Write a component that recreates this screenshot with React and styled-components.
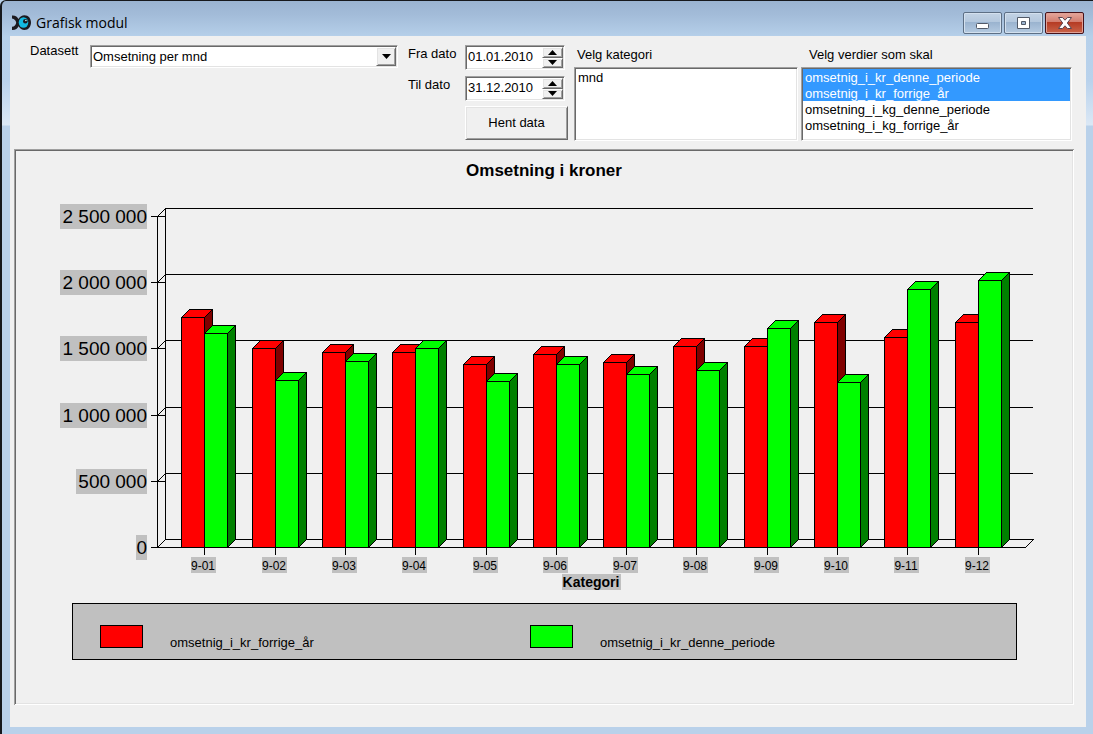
import React from 'react';
import styled, { createGlobalStyle, css } from 'styled-components';

const GlobalStyle = createGlobalStyle`
  *, *::before, *::after {
    box-sizing: border-box;
  }

  body {
    margin: 0;
    background: #b9d1ea;
    color: #000;
    font-family: 'Liberation Sans', Arial, sans-serif;
    font-size: 13px;
    line-height: 16px;
  }

  button, input, select {
    font: inherit;
    color: inherit;
    margin: 0;
    border-radius: 0;
  }
`;

const Bevel = styled.div`
  padding: 1px;
  background: #fff;
  border: 1px solid;
  border-color: #a0a0a0 #fff #fff #a0a0a0;
  box-shadow: inset 1px 1px #696969, inset -1px -1px #e3e3e3;
`;

const raised = css`
  background: #f0f0f0;
  border: 1px solid;
  border-color: #fff #696969 #696969 #fff;
  box-shadow: inset 1px 1px #e3e3e3, inset -1px -1px #a0a0a0;
`;

const Window = styled.main`
  display: flex;
  flex-direction: column;
  min-height: 100vh;
  padding: 0 7px 7px 8px;
  border: solid #16181c;
  border-width: 1px 0 0 2px;
  border-top-left-radius: 6px;
  background: linear-gradient(
    #9ab3d1 0,
    #a3bcd9 14px,
    #b6d0ea 36px,
    #b9d2ec 80px,
    #dbe8f5 124px,
    #b9d1ea 125px
  );
`;

const TitleBar = styled.header`
  display: flex;
  align-items: center;
  height: 35px;
  padding: 8px 2px 0;
`;

const WindowTitle = styled.h1`
  flex: 1;
  margin: 0 0 0 5px;
  font-family: 'Open Sans', 'Noto Sans', sans-serif;
  font-size: 14px;
  font-weight: normal;
  line-height: 20px;
`;

const WindowButtons = styled.div`
  display: flex;
  gap: 2px;
`;

const WindowButton = styled.button`
  display: flex;
  align-items: center;
  justify-content: center;
  width: 39px;
  height: 22px;
  padding: 0;
  border: 1px solid ${props => (props.$close ? '#46121a' : '#5d6f85')};
  border-radius: 2px;
  box-shadow: inset 0 0 0 1px ${props => (props.$close ? '#e0a196' : '#d3e0ee')};
  background: ${props =>
    props.$close
      ? 'linear-gradient(#e5a79c 0, #d27c6e 45%, #b53a23 46%, #c9644a 100%)'
      : 'linear-gradient(#c3d3e5 0, #b3c7dd 45%, #9ab3cf 46%, #b4cae1 100%)'};
`;

const Client = styled.div`
  flex: 1;
  display: flex;
  flex-direction: column;
  padding: 9px 12px 22px 4px;
  background: #f0f0f0;
`;

const Filters = styled.form`
  display: grid;
  grid-template-columns: minmax(0, 378fr) 166px minmax(0, 227fr) minmax(0, 271fr);
  height: 104px;
  padding: 0 2px 0 16px;
`;

const DatasetField = styled.div`
  display: flex;
  align-items: flex-start;
  padding-right: 10px;
`;

const DatasetLabel = styled.label`
  width: 60px;
  line-height: 12px;
`;

const Combo = styled(Bevel)`
  flex: 1;
  display: grid;
  height: 23px;
`;

const ComboSelect = styled.select`
  grid-area: 1 / 1;
  appearance: none;
  width: 100%;
  padding: 0 20px 0 1px;
  border: 0;
  background: transparent;
`;

const ComboArrow = styled.span`
  grid-area: 1 / 1;
  justify-self: end;
  display: flex;
  align-items: center;
  justify-content: center;
  width: 20px;
  pointer-events: none;
  ${raised}
`;

const DateFields = styled.div`
  display: grid;
  grid-template-columns: 57px 100px;
  grid-template-rows: 25px 25px 33px;
  row-gap: 6px;
  align-content: start;
`;

const DateLabel = styled.label`
  padding-top: 1px;
`;

const DateBox = styled(Bevel)`
  display: flex;
`;

const DateInput = styled.input`
  flex: 1;
  min-width: 0;
  padding: 0 0 2px 1px;
  border: 0;
  background: transparent;
`;

const Spinner = styled.div`
  display: flex;
  flex-direction: column;
  width: 21px;
`;

const SpinButton = styled.button`
  flex: 1;
  display: flex;
  align-items: center;
  justify-content: center;
  padding: 0;
  ${raised}
`;

const FetchButton = styled.button`
  grid-column: 2;
  width: 103px;
  margin-top: -1px;
  padding: 0;
  ${raised}
`;

const ListField = styled.div`
  display: flex;
  flex-direction: column;
  padding-right: ${props => props.$gap || 0}px;
`;

const ListLabel = styled.label`
  height: 22px;
  padding: 2px 0 0 ${props => props.$indent}px;
`;

const ListFrame = styled(Bevel)`
  height: 74px;
`;

const ListBox = styled.select`
  display: block;
  width: 100%;
  height: 70px;
  padding: 0;
  border: 0;
  outline: 0;
  overflow: hidden;
  background: #fff;

  option {
    min-height: 16px;
    padding: 1px 2px 0;
    line-height: 15px;
    color: #000;
  }

  option:checked {
    background: #39f linear-gradient(#39f, #39f);
    color: #fff;
  }
`;

const ChartPanel = styled.section`
  flex: 1;
  padding: 10px 2px 42px;
  box-shadow: inset 1px 1px #a0a0a0, inset -1px -1px #fff,
    inset 2px 2px #696969, inset -2px -2px #e3e3e3;
`;

const ChartTitle = styled.h2`
  margin: 0 0 12px;
  font-size: 17px;
  line-height: 24px;
  text-align: center;
`;

const ChartSvg = styled.svg`
  display: block;
  width: 100%;
  height: auto;
  margin-bottom: 12px;
`;

const Legend = styled.ul`
  display: grid;
  grid-template-columns: 430fr 486fr;
  height: 57px;
  margin: 0 55px 0 56px;
  padding: 21px 0 0 27px;
  border: 1px solid #000;
  background: #c0c0c0;
  list-style: none;
`;

const LegendItem = styled.li`
  display: flex;
  gap: 27px;
`;

const Swatch = styled.span`
  width: 43px;
  height: 23px;
  border: 1px solid #000;
  background: ${props => props.$color};
`;

const LegendText = styled.span`
  padding-top: 10px;
`;

const datasets = ['Omsetning per mnd'];
const categories = ['mnd'];
const valueFields = [
  'omsetnig_i_kr_denne_periode',
  'omsetnig_i_kr_forrige_år',
  'omsetning_i_kg_denne_periode',
  'omsetning_i_kg_forrige_år',
];

// turnover in thousands: [label, last year, this period]
const months = [
  ['9-01', 1737, 1616],
  ['9-02', 1503, 1261],
  ['9-03', 1473, 1405],
  ['9-04', 1473, 1503],
  ['9-05', 1382, 1254],
  ['9-06', 1458, 1382],
  ['9-07', 1397, 1307],
  ['9-08', 1518, 1337],
  ['9-09', 1518, 1654],
  ['9-10', 1699, 1246],
  ['9-11', 1586, 1949],
  ['9-12', 1699, 2017],
];

// value in thousands, label, width of the grey label box
const ticks = [
  [0, '0', 11],
  [500, '500 000', 71],
  [1000, '1 000 000', 87],
  [1500, '1 500 000', 87],
  [2000, '2 000 000', 87],
  [2500, '2 500 000', 87],
];

const AXIS = 141;
const BASE = 352;
const DEPTH = 8;
const BAR = 23;
const RIGHT = 1009;

const xFor = i => Math.round(165.3 + i * 70.3);
const yFor = value => Math.round(BASE - value * 0.1324);

const Bar = ({ x, value, front, side }) => {
  const top = yFor(value);
  const right = x + BAR;

  return (
    <g stroke="#000">
      <path
        d={`M${x} ${top}l${DEPTH} ${-DEPTH}h${BAR}l${-DEPTH} ${DEPTH}z`}
        fill={front}
      />
      <path
        d={`M${right} ${top}l${DEPTH} ${-DEPTH}V${BASE - DEPTH}l${-DEPTH} ${DEPTH}z`}
        fill={side}
      />
      <path d={`M${x} ${top}H${right}V${BASE}H${x}z`} fill={front} />
    </g>
  );
};

const Chart = () =>
  <ChartSvg viewBox="0 0 1056 396" role="img" aria-label="Omsetning i kroner">
    <g transform="translate(0.5 0.5)" fill="none" shapeRendering="crispEdges">
      <path
        d={`M${AXIS} ${yFor(2500)}V${BASE}M${AXIS + DEPTH} ${yFor(2500) - DEPTH}V${BASE - DEPTH}`}
        stroke="#000"
      />
      {ticks.map(([value]) =>
        <path
          key={value}
          d={`M${AXIS - 7} ${yFor(value)}h${value ? 15 : 7}M${AXIS} ${yFor(value)}l${DEPTH} ${-DEPTH}H${RIGHT + DEPTH - 1}`}
          stroke="#000"
        />
      )}
      <path d={`M${AXIS} ${BASE}H${RIGHT}l${DEPTH} ${-DEPTH}`} stroke="#000" />
      {months.map(([label, last, current], i) => {
        const x = xFor(i);
        return (
          <g key={label}>
            <Bar x={x} value={last} front="#f00" side="#800000" />
            <Bar x={x + BAR} value={current} front="#0f0" side="#008000" />
            <path d={`M${x + BAR} ${BASE}v7`} stroke="#000" />
          </g>
        );
      })}
    </g>

    {ticks.map(([value, label, width]) =>
      <g key={value}>
        <rect x={131 - width} y={yFor(value) - 12} width={width} height="25" fill="#c0c0c0" />
        <text x="131" y={yFor(value) + 7} fontSize="19" textAnchor="end">{label}</text>
      </g>
    )}
    {months.map(([label], i) => {
      const x = xFor(i) + BAR;
      return (
        <g key={label}>
          <rect x={x - 13} y="362" width="25" height="16" fill="#c0c0c0" />
          <text x={x - 1} y="375" fontSize="12" textAnchor="middle">{label}</text>
        </g>
      );
    })}
    <rect x="546" y="379" width="59" height="16" fill="#c0c0c0" />
    <text x="575" y="392" fontSize="14" fontWeight="bold" textAnchor="middle">Kategori</text>
  </ChartSvg>;

const FishIcon = () =>
  <svg width="19" height="16" viewBox="0 0 19 16" aria-hidden="true">
    <path
      d="M0 .5C3.500 .3 5.500 2 6.500 4C8 1.500 10 .3 12.500 .3C16.500 .3 19 3.500 19 7.500S16.500 15 12.500 15C10 15 8 13.500 6.500 11.200C5.500 13.500 3.500 15.200 0 15V11.800C2.500 11.500 3.800 10 4.200 7.700C3.800 5.500 2.500 4 0 3.600z"
      fill="#1c1a20"
    />
    <ellipse cx="11.500" cy="7.500" rx="4.800" ry="5.200" fill="#12b9e2" />
    <circle cx="13.300" cy="6.300" r="2.300" fill="#1c1a20" />
    <circle cx="13.900" cy="5.500" r="0.800" fill="#d8f2fa" />
  </svg>;

const Triangle = ({ up }) =>
  <svg width="9" height="5" viewBox="0 0 9 5" aria-hidden="true">
    <path d={up ? 'M0 5L4.500 0L9 5z' : 'M0 0H9L4.500 5z'} />
  </svg>;

const DateField = ({ id, label, value }) =>
  <>
    <DateLabel htmlFor={id}>{label}</DateLabel>
    <DateBox>
      <DateInput id={id} type="text" defaultValue={value} />
      <Spinner>
        <SpinButton type="button" aria-label={`${label} opp`}>
          <Triangle up />
        </SpinButton>
        <SpinButton type="button" aria-label={`${label} ned`}>
          <Triangle />
        </SpinButton>
      </Spinner>
    </DateBox>
  </>;

const App = () =>
  <>
    <GlobalStyle />
    <Window>
      <TitleBar>
        <FishIcon />
        <WindowTitle>Grafisk modul</WindowTitle>
        <WindowButtons>
          <WindowButton type="button" aria-label="Minimer">
            <svg width="13" height="12" viewBox="0 0 13 12">
              <rect x=".5" y="6.500" width="12" height="5" rx="1" fill="#fff" stroke="#525a68" />
            </svg>
          </WindowButton>
          <WindowButton type="button" aria-label="Maksimer">
            <svg width="13" height="12" viewBox="0 0 13 12">
              <path
                d="M.5.5h12v11H.5zM4.500 4.500v3h4v-3z"
                fill="#fff"
                fillRule="evenodd"
                stroke="#525a68"
              />
            </svg>
          </WindowButton>
          <WindowButton type="button" aria-label="Lukk" $close>
            <svg width="14" height="12" viewBox="0 0 14 12">
              <path
                d="M.5.5H4.500L7 3.200L9.500.5H13.500L9.300 6L13.500 11.500H9.500L7 8.800L4.500 11.500H.5L4.700 6z"
                fill="#fff"
                stroke="#5c4650"
              />
            </svg>
          </WindowButton>
        </WindowButtons>
      </TitleBar>

      <Client>
        <Filters onSubmit={e => e.preventDefault()}>
          <DatasetField>
            <DatasetLabel htmlFor="dataset">Datasett</DatasetLabel>
            <Combo>
              <ComboSelect id="dataset">
                {datasets.map(name => <option key={name}>{name}</option>)}
              </ComboSelect>
              <ComboArrow>
                <Triangle />
              </ComboArrow>
            </Combo>
          </DatasetField>

          <DateFields>
            <DateField id="from" label="Fra dato" value="01.01.2010" />
            <DateField id="to" label="Til dato" value="31.12.2010" />
            <FetchButton type="submit">Hent data</FetchButton>
          </DateFields>

          <ListField $gap={3}>
            <ListLabel htmlFor="category" $indent={3}>Velg kategori</ListLabel>
            <ListFrame>
              <ListBox id="category" size={4}>
                {categories.map(name => <option key={name}>{name}</option>)}
              </ListBox>
            </ListFrame>
          </ListField>

          <ListField>
            <ListLabel htmlFor="values" $indent={8}>Velg verdier som skal</ListLabel>
            <ListFrame>
              <ListBox id="values" multiple size={4} defaultValue={valueFields.slice(0, 2)}>
                {valueFields.map(name => <option key={name}>{name}</option>)}
              </ListBox>
            </ListFrame>
          </ListField>
        </Filters>

        <ChartPanel>
          <ChartTitle>Omsetning i kroner</ChartTitle>
          <Chart />
          <Legend>
            <LegendItem>
              <Swatch $color="#f00" />
              <LegendText>omsetnig_i_kr_forrige_år</LegendText>
            </LegendItem>
            <LegendItem>
              <Swatch $color="#0f0" />
              <LegendText>omsetnig_i_kr_denne_periode</LegendText>
            </LegendItem>
          </Legend>
        </ChartPanel>
      </Client>
    </Window>
  </>;

export default App;
